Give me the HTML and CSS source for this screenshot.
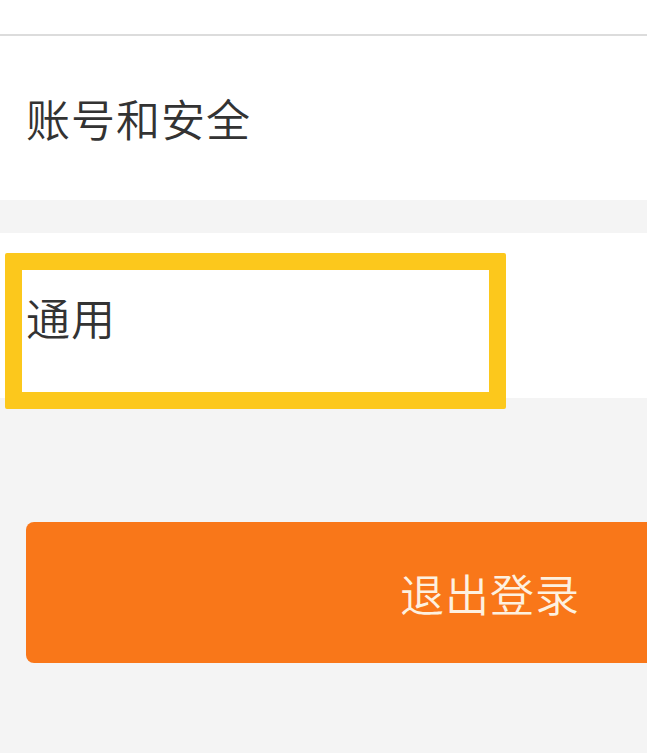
FILE: index.html
```html
<!DOCTYPE html>
<html lang="zh">
<head>
<meta charset="utf-8">
<link rel="stylesheet" href="styles.css">
</head>
<body>
<div class="page">
  <section class="group group-top">
    <div class="top-strip"></div>
    <div class="row row-account"><span class="label">账号和安全</span></div>
  </section>
  <section class="group group-general">
    <div class="row row-general"><span class="label">通用</span></div>
    <div class="highlight"></div>
  </section>
  <div class="logout-wrap">
    <button class="logout">退出登录</button>
  </div>
</div>
</body>
</html>
```
FILE: styles.css
```css
html, body {
  margin: 0;
  padding: 0;
  background: #f4f4f4;
  overflow: hidden;
}
.page {
  width: 647px;
  height: 753px;
  overflow: hidden;
  font-family: "Noto Sans CJK SC", "Noto Sans", sans-serif;
}
.group {
  background: #ffffff;
}
.group-top {
  display: flex;
  flex-direction: column;
  height: 200px;
}
.top-strip {
  height: 34px;
  border-bottom: 2px solid #dcdcdc;
}
.row {
  display: flex;
  align-items: center;
  padding-left: 26px;
}
.row-account {
  flex: 1;
}
.label {
  font-size: 44px;
  font-weight: 350;
  line-height: 1;
  color: #333333;
  letter-spacing: 1px;
}
.group-general {
  position: relative;
  margin-top: 33px;
  height: 165px;
}
.row-general {
  height: 165px;
  padding-top: 2px;
  box-sizing: border-box;
}
.highlight {
  position: absolute;
  left: 5px;
  top: 20px;
  width: 501px;
  height: 156px;
  box-sizing: border-box;
  border: 17px solid #fcc81c;
  border-radius: 2px;
}
.logout-wrap {
  padding-top: 124px;
  padding-left: 26px;
}
.logout {
  display: flex;
  align-items: center;
  justify-content: center;
  width: 928px;
  height: 141px;
  border: none;
  border-radius: 8px;
  background: #f97719;
  color: #fdf1e0;
  font-family: "Noto Sans CJK SC", "Noto Sans", sans-serif;
  font-size: 44px;
  font-weight: 350;
  letter-spacing: 1px;
  padding: 0;
}
```
